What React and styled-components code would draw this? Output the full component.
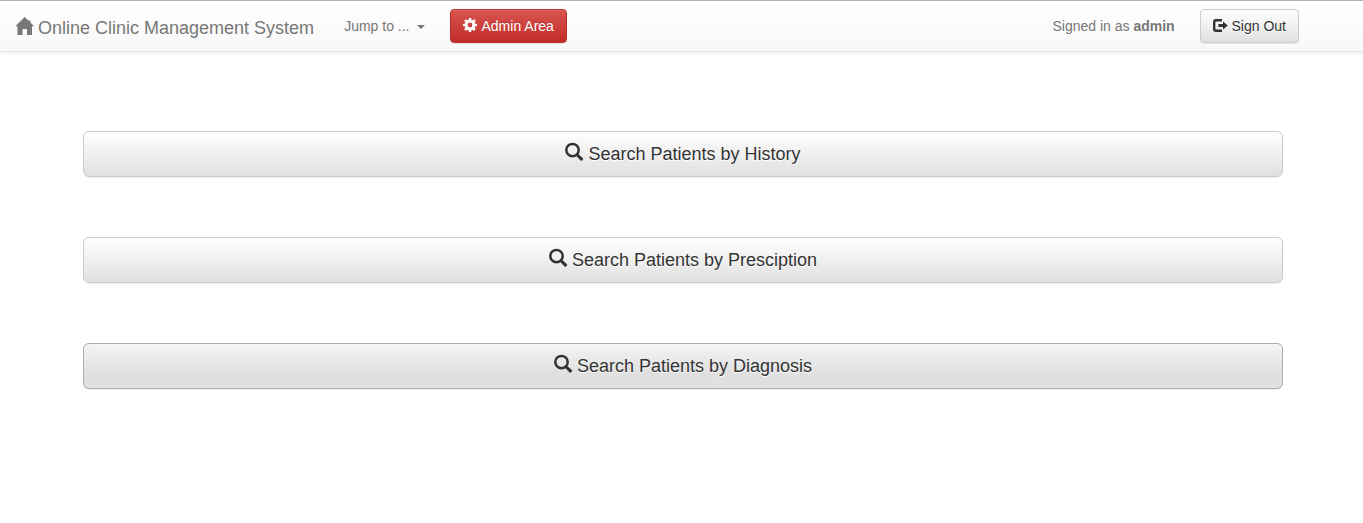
import React from "react";
import styled, { createGlobalStyle } from 'styled-components';

const GlobalStyle = createGlobalStyle`
	* {
		box-sizing: border-box;
	}
	body {
		margin: 0;
		border-top: 1px solid #b0b0b0;
		background: #fff;
		color: #333;
		font-family: "Liberation Sans", Arial, sans-serif;
		font-size: 14px;
		line-height: 20px;
	}
`;

const Icon = styled.svg`
	width: 1em;
	height: 1em;
	overflow: visible;
	fill: currentColor;
	vertical-align: -1px;
`;

const Navbar = styled.nav`
	display: flex;
	align-items: center;
	min-height: 51px;
	padding: 0 64px 0 15px;
	border-bottom: 1px solid #e7e7e7;
	background: linear-gradient(to bottom, #fff 0%, #f8f8f8 100%);
	box-shadow: 0 1px 5px rgba(0, 0, 0, .075);
	color: #777;
	text-shadow: 0 1px 0 rgba(255, 255, 255, .25);
	white-space: nowrap;
`;

const Brand = styled.a`
	margin-right: 30px;
	padding-top: 2px;
	color: inherit;
	font-size: 18px;
	text-decoration: none;
`;

const Toggle = styled.button`
	margin: 0 25px 0 0;
	padding: 0;
	border: 0;
	background: none;
	color: inherit;
	font: inherit;
	cursor: pointer;
`;

const Caret = styled.span`
	display: inline-block;
	margin-left: 4px;
	border-top: 4px solid;
	border-right: 4px solid transparent;
	border-left: 4px solid transparent;
	vertical-align: middle;
`;

const SignedIn = styled.p`
	margin: 0 25px 0 auto;
`;

const Button = styled.button`
	padding: 6px 12px;
	border: 1px solid ${props => props.$danger ? '#b92c28' : '#ccc'};
	border-radius: 4px;
	background: ${props => props.$danger
		? 'linear-gradient(to bottom, #d9534f 0%, #c12e2a 100%)'
		: 'linear-gradient(to bottom, #fff 0%, #e0e0e0 100%)'};
	box-shadow: inset 0 1px 0 rgba(255, 255, 255, .15), 0 1px 1px rgba(0, 0, 0, .075);
	color: ${props => props.$danger ? '#fff' : '#333'};
	font: inherit;
	text-shadow: ${props => props.$danger ? '0 -1px 0 rgba(0, 0, 0, .2)' : '0 1px 0 #fff'};
	cursor: pointer;
`;

const NavButton = styled(Button)`
	& > ${Icon} {
		margin-right: 1px;
	}
`;

const SearchButton = styled(Button)`
	width: 100%;
	padding: 10px 16px;
	border-color: ${props => props.$active ? '#adadad' : '#ccc'};
	border-radius: 6px;
	background: ${props => props.$active
		? '#e0e0e0 linear-gradient(to bottom, #fff 0%, #e0e0e0 100%) 0 -15px repeat-x'
		: 'linear-gradient(to bottom, #fff 0%, #e0e0e0 100%)'};
	font-size: 18px;
	line-height: 24px;
`;

const Main = styled.main`
	display: flex;
	flex-direction: column;
	gap: 60px;
	padding: 79px 80px 79px 83px;
`;

const HomeIcon = () => (
	<Icon viewBox="0 0 18 18" aria-hidden="true">
		<path d="M9.7 0 L14 4.1 V3.4 H15.6 V5.7 L19.2 9.2 H17 V18 H12 V12 H7.5 V18 H2.5 V9.2 H0.3 Z" />
	</Icon>
);

const CogIcon = () => (
	<Icon viewBox="0 0 14 14" aria-hidden="true">
		<circle cx="7" cy="7" r="3.8" fill="none" stroke="currentColor" strokeWidth="2.8" />
		{[0, 45, 90, 135, 180, 225, 270, 315].map(angle => (
			<path key={angle} d="M5.4 2.4 L5.9 0 H8.1 L8.6 2.4 Z" transform={`rotate(${angle} 7 7)`} />
		))}
	</Icon>
);

const SignOutIcon = () => (
	<Icon viewBox="0 0 14 14" aria-hidden="true">
		<path d="M9 1 H3 Q0 1 0 4 V11 Q0 14 3 14 H9 V11.6 H3.6 Q2.4 11.6 2.4 10.4 V4.6 Q2.4 3.4 3.6 3.4 H9 Z" />
		<path d="M10 3.5 L14.8 7.5 L10 11.5 V9 H5.4 V6 H10 Z" />
	</Icon>
);

const SearchIcon = () => (
	<Icon viewBox="0 0 18 18" aria-hidden="true">
		<circle cx="7.5" cy="7.1" r="6.2" fill="none" stroke="currentColor" strokeWidth="2.5" />
		<path d="M10.8 12.6 L12.8 10.6 L18 15.2 Q18.5 15.9 17.9 16.6 L17 17.5 Q16.3 18 15.6 17.4 Z" />
	</Icon>
);

const searches = [
	{ id: 'history', label: 'Search Patients by History' },
	{ id: 'presciption', label: 'Search Patients by Presciption' },
	{ id: 'diagnosis', label: 'Search Patients by Diagnosis', active: true },
];

const App = () => {
  return (
	<>
		<GlobalStyle />
		<Navbar>
			<Brand href="#"><HomeIcon /> Online Clinic Management System</Brand>
			<Toggle type="button" aria-haspopup="menu">Jump to ... <Caret /></Toggle>
			<NavButton type="button" $danger><CogIcon /> Admin Area</NavButton>
			<SignedIn>Signed in as <b>admin</b></SignedIn>
			<NavButton type="button"><SignOutIcon /> Sign Out</NavButton>
		</Navbar>
		<Main>
			{
				searches.map(search => (
					<SearchButton key={search.id} type="button" $active={search.active}>
						<SearchIcon /> {search.label}
					</SearchButton>
				))
			}
		</Main>
	</>
  )
};
export default App;
